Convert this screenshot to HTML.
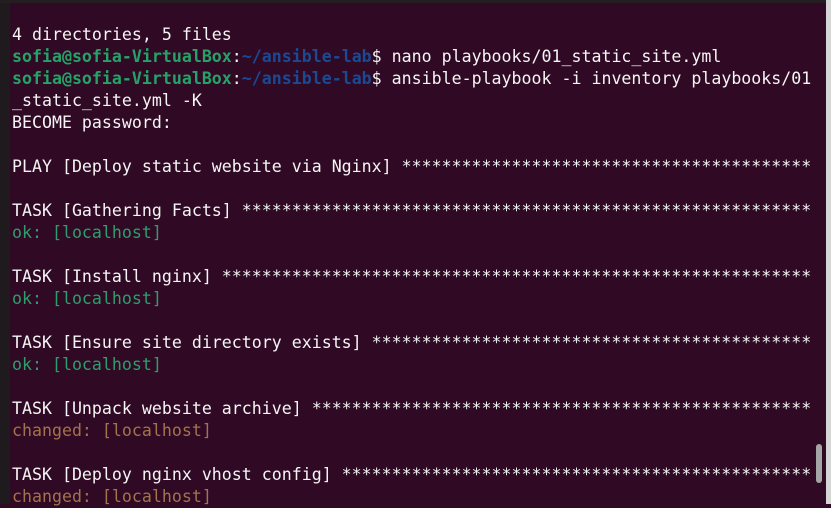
<!DOCTYPE html>
<html><head><meta charset="utf-8"><style>
html,body{margin:0;padding:0;width:831px;height:504px;overflow:hidden;background:#300a24;}
#l{position:absolute;left:0;top:0;width:10px;height:504px;background:#1f1a1d;}
#r{position:absolute;left:826px;top:0;width:5px;height:504px;background:#d6d6d6;}
#top{position:absolute;left:0;top:0;width:826px;height:3px;background:#241d22;}
#sb{position:absolute;left:816px;top:444px;width:6px;height:39px;border-radius:3px;background:#a5a5a5;}
pre{position:absolute;left:12px;top:24px;margin:0;font-family:"DejaVu Sans Mono","Liberation Mono",monospace;font-size:16.6px;line-height:22px;color:#f5f5f5;white-space:pre;}
.g{color:#26a269;font-weight:bold}.b{color:#1a4a94;font-weight:bold}.o{color:#2d9e6b}.c{color:#a2734c}
</style></head><body>
<div id="l"></div><div id="top"></div><div id="r"></div><div id="sb"></div>
<pre>4 directories, 5 files
<span class="g">sofia@sofia-VirtualBox</span>:<span class="b">~/ansible-lab</span>$ nano playbooks/01_static_site.yml
<span class="g">sofia@sofia-VirtualBox</span>:<span class="b">~/ansible-lab</span>$ ansible-playbook -i inventory playbooks/01
_static_site.yml -K
BECOME password:

PLAY [Deploy static website via Nginx] *****************************************

TASK [Gathering Facts] *********************************************************
<span class="o">ok: [localhost]</span>

TASK [Install nginx] ***********************************************************
<span class="o">ok: [localhost]</span>

TASK [Ensure site directory exists] ********************************************
<span class="o">ok: [localhost]</span>

TASK [Unpack website archive] **************************************************
<span class="c">changed: [localhost]</span>

TASK [Deploy nginx vhost config] ***********************************************
<span class="c">changed: [localhost]</span></pre>
</body></html>
